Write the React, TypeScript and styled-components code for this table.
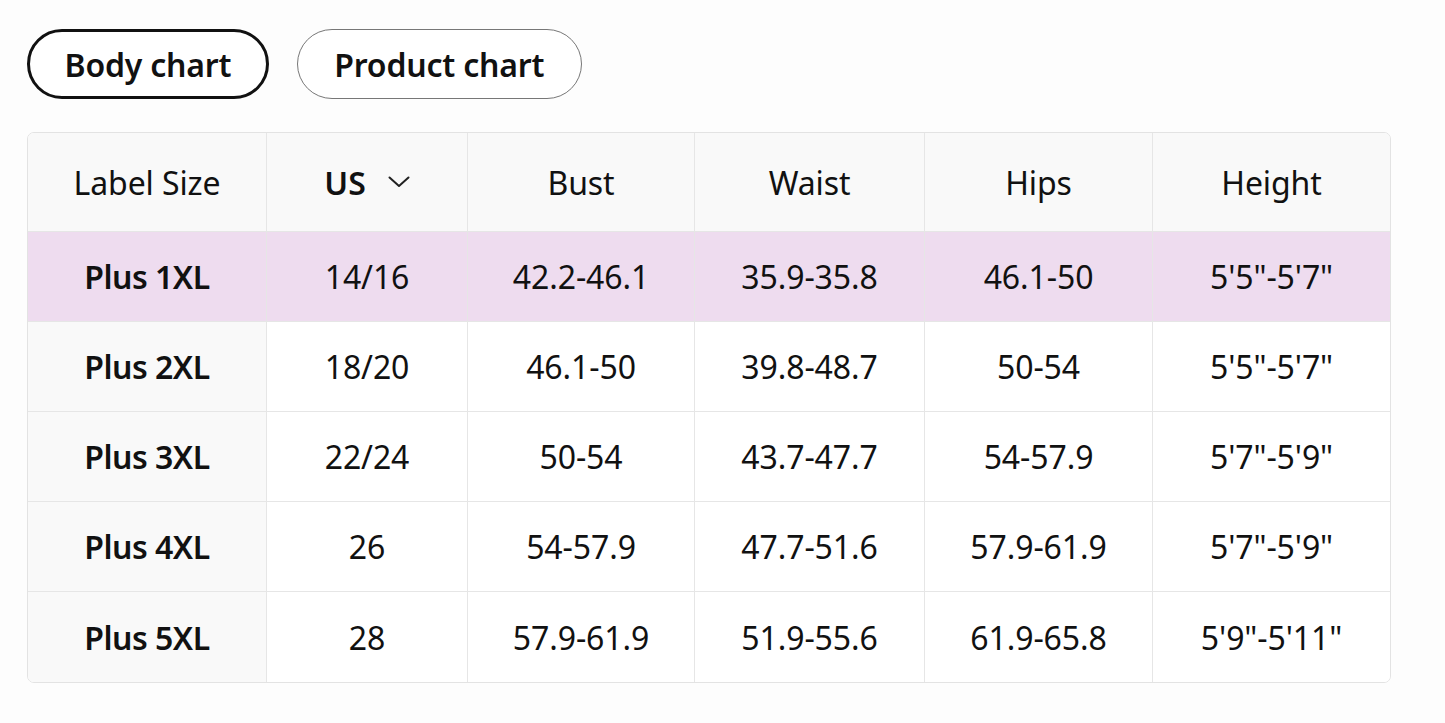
import React from "react";
import styled, { createGlobalStyle } from "styled-components";

const Global = createGlobalStyle`
  html, body { margin: 0; padding: 0; background: #fdfdfd; }
  body { font-family: "Noto Sans", "Open Sans", sans-serif; color: #111; }
`;

const Page = styled.div`
  padding: 29px 0 0 27px;
  width: 1364px;
`;

const Tabs = styled.div`
  display: flex;
  gap: 28px;
  margin-bottom: 33px;
`;

const Tab = styled.button<{ $active?: boolean }>`
  box-sizing: border-box;
  height: 70px;
  border-radius: 35px;
  background: #fff;
  border: ${(p) => (p.$active ? "3px solid #111" : "1px solid #777")};
  padding: ${(p) => (p.$active ? "0 34.5px" : "0 36.5px")};
  font-family: inherit;
  font-size: 32px;
  font-weight: 600;
  color: #111;
  letter-spacing: -0.2px;
  cursor: pointer;
`;

const Table = styled.div`
  display: grid;
  grid-template-columns: 239px 201px 227px 230px 228px 1fr;
  border: 1px solid #e3e3e3;
  border-radius: 7px;
  overflow: hidden;
  background: #fff;
`;

const Cell = styled.div<{ $head?: boolean; $first?: boolean; $hl?: boolean; $last?: boolean; $bottom?: boolean }>`
  height: ${(p) => (p.$head ? "99px" : "90px")};
  display: flex;
  align-items: center;
  justify-content: center;
  gap: 22px;
  font-size: 32px;
  letter-spacing: ${(p) => (p.$first && !p.$head ? "-0.5px" : "-0.1px")};
  font-weight: ${(p) => (p.$first && !p.$head ? 600 : 400)};
  color: #111;
  background: ${(p) => (p.$hl ? "#eedcef" : p.$head || p.$first ? "#f9f9f9" : "#fff")};
  border-right: ${(p) => (p.$last ? "none" : "1px solid #e6e6e6")};
  border-bottom: ${(p) => (p.$bottom ? "none" : "1px solid #e6e6e6")};
  box-sizing: border-box;
`;

const Bold = styled.span`
  font-weight: 600;
`;

const headers = ["Label Size", "US", "Bust", "Waist", "Hips", "Height"];
const rows = [
  ["Plus 1XL", "14/16", "42.2-46.1", "35.9-35.8", "46.1-50", `5'5"-5'7"`],
  ["Plus 2XL", "18/20", "46.1-50", "39.8-48.7", "50-54", `5'5"-5'7"`],
  ["Plus 3XL", "22/24", "50-54", "43.7-47.7", "54-57.9", `5'7"-5'9"`],
  ["Plus 4XL", "26", "54-57.9", "47.7-51.6", "57.9-61.9", `5'7"-5'9"`],
  ["Plus 5XL", "28", "57.9-61.9", "51.9-55.6", "61.9-65.8", `5'9"-5'11"`],
];

const Chevron = () => (
  <svg width="22" height="14" viewBox="0 0 22 14" fill="none">
    <path d="M1.5 2.5 L11 11 L20.5 2.5" stroke="#222" strokeWidth="2" strokeLinecap="round" strokeLinejoin="round" />
  </svg>
);

export default function App() {
  return (
    <Page>
      <Global />
      <Tabs>
        <Tab $active>Body chart</Tab>
        <Tab>Product chart</Tab>
      </Tabs>
      <Table>
        {headers.map((h, i) => (
          <Cell key={h} $head $first={i === 0} $last={i === 5}>
            {h === "US" ? (
              <>
                <Bold>US</Bold>
                <Chevron />
              </>
            ) : (
              h
            )}
          </Cell>
        ))}
        {rows.map((r, ri) =>
          r.map((c, ci) => (
            <Cell
              key={ri + "-" + ci}
              $first={ci === 0}
              $hl={ri === 0}
              $last={ci === 5}
              $bottom={ri === rows.length - 1}
            >
              {c}
            </Cell>
          ))
        )}
      </Table>
    </Page>
  );
}
